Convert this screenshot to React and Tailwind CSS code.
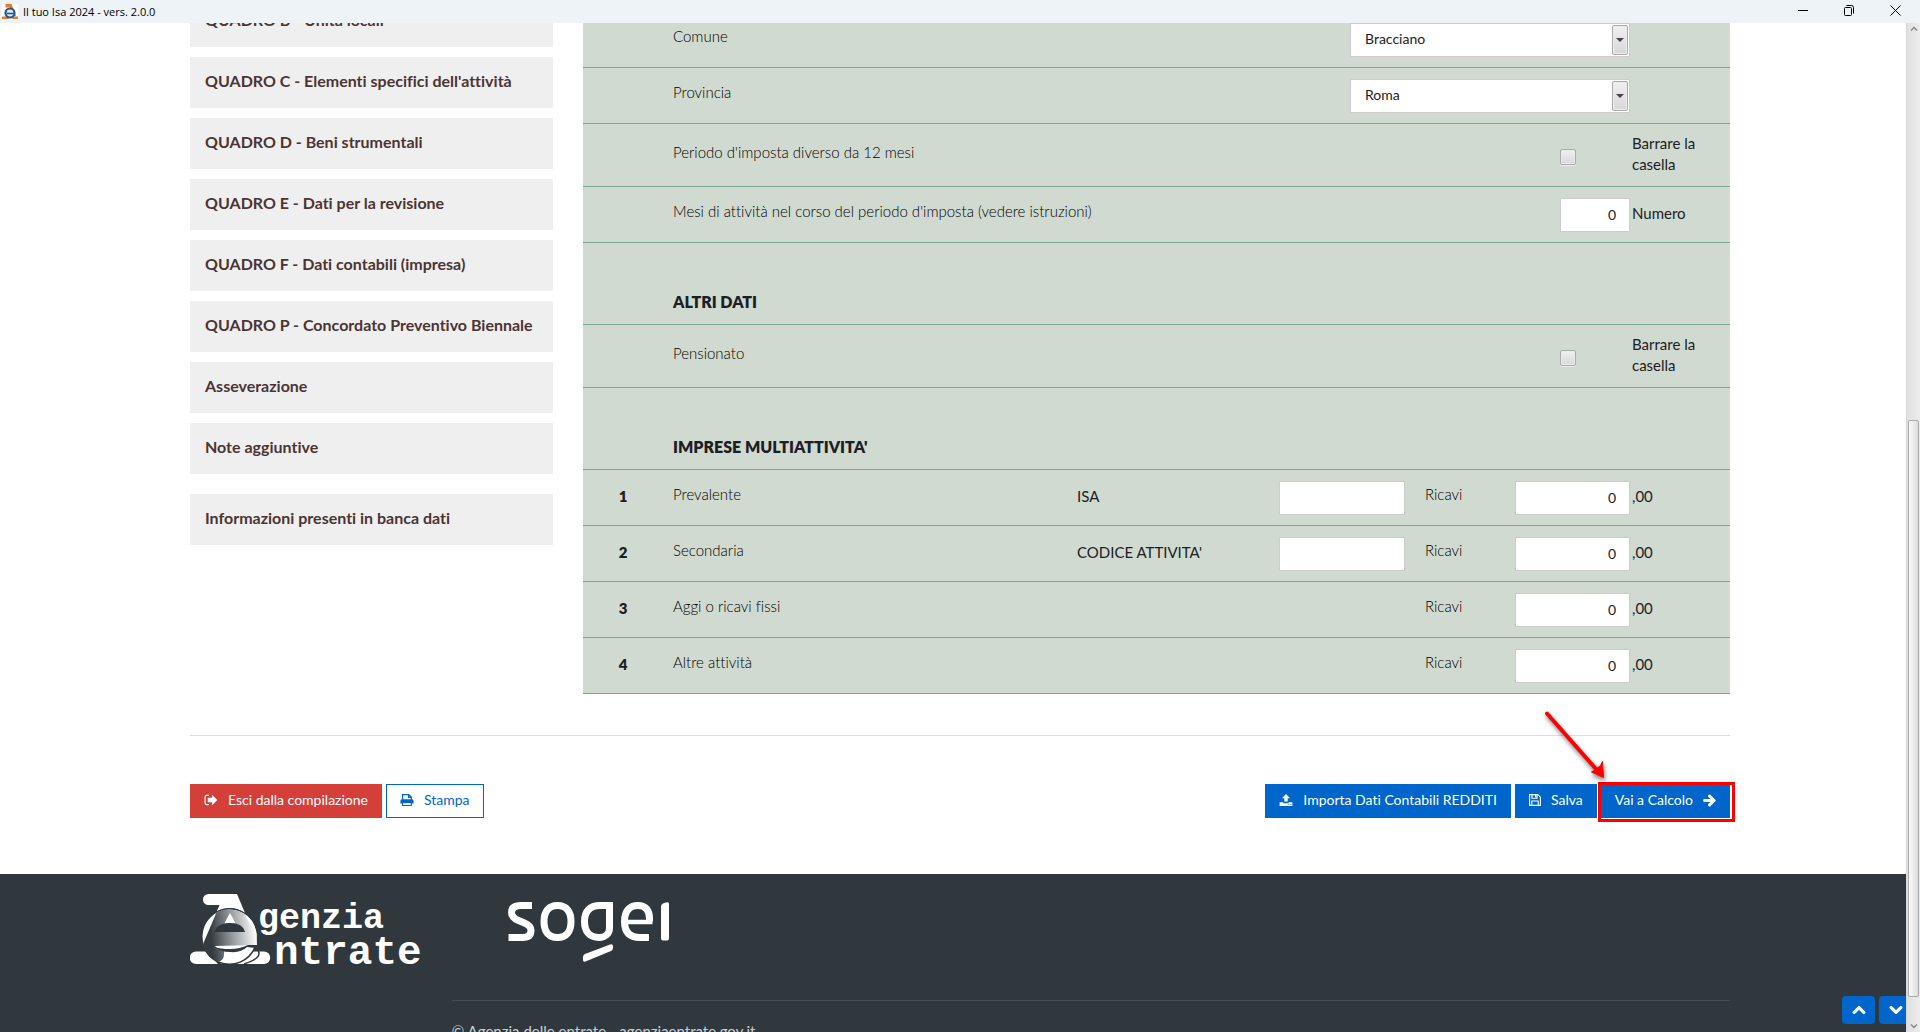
import React from "react";
import { FaArrowRight, FaChevronDown, FaChevronUp } from "react-icons/fa";

const sections = [
  "QUADRO B - Unità locali",
  "QUADRO C - Elementi specifici dell'attività",
  "QUADRO D - Beni strumentali",
  "QUADRO E - Dati per la revisione",
  "QUADRO F - Dati contabili (impresa)",
  "QUADRO P - Concordato Preventivo Biennale",
  "Asseverazione",
  "Note aggiuntive",
];

const activities = [
  { label: "Prevalente", code: "ISA" },
  { label: "Secondaria", code: "CODICE ATTIVITA'" },
  { label: "Aggi o ricavi fissi" },
  { label: "Altre attività" },
];

const rowBase = "grid items-center border-b border-[#78a890]";
const fieldRow = `${rowBase} grid-cols-[90px_minmax(0,1fr)_280px_100px]`;
const activityRow = `${rowBase} h-14 grid-cols-[90px_minmax(0,1fr)_202px_146px_90px_115px_100px]`;
const labelText = "pb-1.5 font-light text-black";
const unitText = "pb-0.5 pl-0.5";
const inputBox = "h-[34px] border border-[#ccc] bg-white px-[13px] text-right text-sm";
const button = "flex h-[34px] items-center gap-2.5 border px-[13px] pb-0.5 text-sm whitespace-nowrap";
const blueButton = `${button} border-[#06c] bg-[#06c] text-white`;

function AppIcon() {
  return (
    <svg className="size-4 bg-white" viewBox="0 0 16 16" aria-hidden="true">
      <path d="M3.500 0h6l4.500 12H11L8 3.500H3.500z" fill="#f07820" />
      <path d="M0 12.500h5l2 2.500H0zM16 12.500h-4l-2 2.500h6z" fill="#f07820" />
      <circle cx="8" cy="9" r="4.500" fill="#dce8f4" stroke="#27588f" strokeWidth="2.200" />
      <path d="M5 9.500h7" stroke="#27588f" strokeWidth="1.600" />
    </svg>
  );
}

function TitleBar() {
  return (
    <header className="flex h-[23px] shrink-0 items-center justify-between bg-[#eef3f8] pl-0.5 text-black">
      <div className="flex items-center gap-[5px] font-['Open_Sans',sans-serif] text-[11px]">
        <AppIcon />
        <span>Il tuo Isa 2024 - vers. 2.0.0</span>
      </div>
      <div className="flex h-full pr-0.5">
        <button type="button" aria-label="Riduci a icona" className="flex w-[46px] items-center justify-center pb-0.5">
          <svg className="size-[11px]" viewBox="0 0 11 11" stroke="currentColor" fill="none">
            <path d="M0 5.500h10" />
          </svg>
        </button>
        <button type="button" aria-label="Ripristina" className="flex w-[46px] items-center justify-center pb-0.5">
          <svg className="size-[11px]" viewBox="0 0 11 11" stroke="currentColor" fill="none">
            <rect x="0.500" y="2.500" width="7" height="8" rx="1" />
            <path d="M2.500 0.500h5a2 2 0 0 1 2 2V8.500" />
          </svg>
        </button>
        <button type="button" aria-label="Chiudi" className="flex w-[46px] items-center justify-center pb-0.5">
          <svg className="size-[11px]" viewBox="0 0 11 11" stroke="currentColor" fill="none">
            <path d="M0.500 0.500l10 10M10.500 0.500l-10 10" />
          </svg>
        </button>
      </div>
    </header>
  );
}

function SectionLink({ children }) {
  return (
    <a href="#" className="flex h-[51px] items-center bg-[#efefef] px-[15px] pb-1 text-base font-bold text-[#4c3434]">
      {children}
    </a>
  );
}

function SelectRow({ id, label, value }) {
  return (
    <div className={`${fieldRow} h-14`}>
      <label htmlFor={id} className={`col-start-2 ${labelText}`}>{label}</label>
      <div className="relative">
        <select id={id} defaultValue={value} className="h-[34px] w-full appearance-none rounded-none border border-[#ccc] bg-white pb-px pl-3.5 text-sm">
          <option>{value}</option>
        </select>
        <span className="pointer-events-none absolute top-0.5 right-0.5 flex h-[30px] w-4 items-center justify-center rounded-xs border border-[#aaa] bg-linear-to-b from-[#f0f0f0] to-[#d8d8d8] shadow-[inset_0_0_0_1px_#ececec]">
          <svg className="h-1 w-2" viewBox="0 0 8 4" fill="#444"><path d="M0 0h8L4 4z" /></svg>
        </span>
      </div>
    </div>
  );
}

function CheckRow({ id, label }) {
  return (
    <div className={`${fieldRow} h-[63px]`}>
      <label htmlFor={id} className={`col-start-2 ${labelText}`}>{label}</label>
      <div className="flex justify-end">
        <div className="flex w-[70px] pt-1">
          <input
            id={id}
            type="checkbox"
            className="size-4 appearance-none rounded-xs border border-[#aaa] bg-linear-to-b from-[#f0f0f0] to-[#d8d8d8] shadow-[inset_0_0_0_1px_#ececec,0_1px_0_#ececec] checked:bg-[#06c]"
          />
        </div>
      </div>
      <span className={`${unitText} pr-8`}>Barrare la casella</span>
    </div>
  );
}

function HeadingRow({ children }) {
  return (
    <div className="flex h-[82px] items-end border-b border-[#78a890] pb-3 pl-[90px]">
      <h2 className="text-base leading-[21px] font-extrabold">{children}</h2>
    </div>
  );
}

function ExitIcon() {
  return (
    <svg className="h-3 w-3.5" viewBox="0 0 14 12" fill="currentColor" aria-hidden="true">
      <path d="M5 10v1.200H2.800A2.300 2.300 0 0 1 .5 8.900V3.100A2.300 2.300 0 0 1 2.800.8H5V2H2.800a1.100 1.100 0 0 0-1.100 1.100v5.800A1.100 1.100 0 0 0 2.800 10z" />
      <path d="M8 .8l5.300 5.200L8 11.200V8.200H3.800V3.800H8z" />
    </svg>
  );
}

function PrintIcon() {
  return (
    <svg className="h-3 w-3.5" viewBox="0 0 14 12" aria-hidden="true">
      <path d="M2.600 6V.6h6.200l2.500 2.500V6M8.600.8v2.600h2.600M2.600 8.800v2.600h8.700V8.800z" fill="none" stroke="currentColor" strokeWidth="1.200" />
      <path d="M2 5.200h10a1.600 1.600 0 0 1 1.600 1.600v2.800H.4V6.800A1.600 1.600 0 0 1 2 5.200z" fill="currentColor" />
      <path d="M3.200 9.200h7.500v1.600H3.200z" fill="#fff" />
    </svg>
  );
}

function UploadIcon() {
  return (
    <svg className="h-3 w-3.5" viewBox="0 0 14 12" fill="currentColor" aria-hidden="true">
      <path d="M7 0l4 4.200H8.700V7.600H5.300V4.200H3z" />
      <path fillRule="evenodd" d="M.6 8.300H4.300V9.200h5.400V8.300h3.700V12H.6zM9.300 10.200v.9h1v-.9zM11.300 10.200v.9h1v-.9z" />
    </svg>
  );
}

function SaveIcon() {
  return (
    <svg className="size-3" viewBox="0 0 12 12" fill="none" stroke="currentColor" strokeWidth="1.100" aria-hidden="true">
      <path d="M.6.6h8.200l2.600 2.600v8.200H.6z" />
      <path d="M3 .8v3.400h5V.8M2.800 11V7h6.400v4" />
      <path d="M6 1h1.300v2.200H6z" fill="currentColor" stroke="none" />
    </svg>
  );
}

function AgenziaLogo() {
  return (
    <svg className="h-20 w-[234px]" viewBox="0 0 234 80" role="img" aria-label="Agenzia Entrate">
      <defs>
        <linearGradient id="disc" x1="0" y1="0.100" x2="1" y2="0">
          <stop offset="0.100" stopColor="#343b41" />
          <stop offset="0.450" stopColor="#8b9094" />
          <stop offset="0.950" stopColor="#fff" />
        </linearGradient>
      </defs>
      <path d="M18.500 1H47l8 19Q41 11 26.500 19l3-7H18.500a5.500 5.500 0 0 1 0-11z" fill="#fff" />
      <path d="M6 58.500h10l12 12.500H6a6.200 6.200 0 0 1 0-12.500zM58 58.500h16a6.200 6.200 0 0 1 0 12.500H30z" fill="#fff" />
      <circle cx="39.500" cy="43.500" r="28.500" fill="#30373d" />
      <circle cx="39.500" cy="43.500" r="27" fill="#fff" />
      <path d="M26 20.500L13.500 50Q15 64 28 69q7-1 6-11-6-1-9-5L67 52Q67 27 54 20.500q-6-3.500-14.500-4T26 20.500z" fill="url(#disc)" />
      <path d="M40 20l6 11q-6-2-12 0zM55 22l12 22q-1-15-12-22z" fill="#fff" />
      <path d="M24 39q3-9 16-9t15 9z" fill="#30373d" />
      <path d="M25 54q5 2 15 2T58 52h10q-1 2-3 3l-8-1q-6 6-17 5-10 0-15-5z" fill="#30373d" />
      <path d="M68 57q5 8-14 14" fill="none" stroke="#30373d" strokeWidth="1.500" />
      <g fill="#fff" fontFamily="'Liberation Mono', monospace" fontWeight="700">
        <text x="68" y="35" fontSize="35">genzia</text>
        <text x="84" y="70.500" fontSize="41">ntrate</text>
      </g>
    </svg>
  );
}

function SogeiLogo() {
  return (
    <svg className="h-[61px] w-[162px]" viewBox="0 0 162 61" role="img" aria-label="Sogei">
      <g fill="none" stroke="#fff" strokeWidth="7">
        <path d="M24 3.500H13Q3.500 3.500 3.500 10.500q0 5 7 8l6 2.500q6.500 2.500 6.500 7.500 0 7-8.500 7H.5" />
        <path d="M49.500 3.500c9 0 13.500 6 13.500 16s-4.500 16-13.500 16S36 29.500 36 19.500s4.500-16 13.500-16z" />
        <path d="M101.500 3.500H92c-10.500 0-15.500 6-15.500 16s5 16 14.500 16c6.500 0 10.500-4 10.500-9.500z" />
        <path d="M141 35.500h-9c-10.500 0-15.500-5.500-15.500-16s5-16 13.500-16c8 0 11.500 5 11.500 13v3" />
        <path d="M118 20h26.500" strokeWidth="4.500" />
      </g>
      <path d="M77 52l25-9.500q3-1 3 1.500v2q0 2-2 3L77.500 59.500Q75 60.500 75 58v-3q0-2 2-3zM153 5q0-3 3-4l3-.8q2-.4 2 1.800v34.500q0 2-2 2h-4q-2 0-2-2z" fill="#fff" />
    </svg>
  );
}

function CalloutArrow() {
  return (
    <svg className="pointer-events-none absolute -top-[76px] -left-[58px] h-[76px] w-[68px] drop-shadow-[1px_3px_2px_rgba(0,0,0,0.5)]" viewBox="0 0 68 76" aria-hidden="true">
      <path d="M4 5.500L53 61" stroke="#f00" strokeWidth="4" strokeLinecap="round" />
      <path d="M60.500 69.500l-12-5.500 4-2.500 5-4 2-4z" fill="#f00" stroke="#f00" />
    </svg>
  );
}

function Scrollbar() {
  return (
    <div className="absolute inset-y-0 right-0 flex w-3.5 flex-col items-center border-l border-[#d8d8d8] bg-linear-to-r from-[#e0e0e0] to-[#ececec] py-0.5" aria-hidden="true">
      <svg className="h-2 w-2 shrink-0" viewBox="0 0 8 8" fill="none" stroke="#888" strokeWidth="1.500"><path d="M1 5.500l3-3 3 3" /></svg>
      <div className="flex w-full grow flex-col">
        <div className="grow-[388]" />
        <div className="mx-px grow-[576] rounded-xs border border-[#aaa] bg-linear-to-r from-[#fafafa] to-[#dcdcdc]" />
        <div className="grow-[25]" />
      </div>
      <svg className="h-2 w-2 shrink-0" viewBox="0 0 8 8" fill="none" stroke="#888" strokeWidth="1.500"><path d="M1 2.500l3 3 3-3" /></svg>
    </div>
  );
}

export default function App() {
  return (
    <div className="flex h-screen flex-col overflow-hidden bg-white font-[Lato,sans-serif] text-[15px] leading-[21px] text-[#1c2024] [font-variant-ligatures:none]">
      <TitleBar />
      <div className="relative min-h-0 grow overflow-hidden">
        <div className="-mt-[27px]">
          <main className="mx-auto max-w-[1570px] px-[15px] pb-14">
            <div className="flex items-start gap-[30px]">
              <nav className="flex w-[363px] shrink-0 flex-col gap-2.5">
                {sections.map((name) => (
                  <SectionLink key={name}>{name}</SectionLink>
                ))}
                <div className="pt-2.5">
                  <SectionLink>Informazioni presenti in banca dati</SectionLink>
                </div>
              </nav>

              <form className="mt-4 min-w-0 grow bg-[#d0dad0]">
                <SelectRow id="comune" label="Comune" value="Bracciano" />
                <SelectRow id="provincia" label="Provincia" value="Roma" />
                <CheckRow id="periodo" label="Periodo d'imposta diverso da 12 mesi" />
                <div className={`${fieldRow} h-14`}>
                  <label htmlFor="mesi" className={`col-start-2 ${labelText}`}>
                    Mesi di attività nel corso del periodo d'imposta (vedere istruzioni)
                  </label>
                  <div className="flex justify-end">
                    <input id="mesi" defaultValue="0" className={`${inputBox} w-[70px]`} />
                  </div>
                  <span className={unitText}>Numero</span>
                </div>
                <HeadingRow>ALTRI DATI</HeadingRow>
                <CheckRow id="pensionato" label="Pensionato" />
                <HeadingRow>IMPRESE MULTIATTIVITA'</HeadingRow>
                {activities.map(({ label, code }, i) => (
                  <div key={label} className={activityRow}>
                    <span className="pr-2.5 pb-0.5 text-center font-extrabold">{i + 1}</span>
                    <span className={labelText}>{label}</span>
                    {code && <label htmlFor={`codice-${i}`} className="pb-0.5">{code}</label>}
                    {code && <input id={`codice-${i}`} className={`${inputBox} w-[126px]`} />}
                    <label htmlFor={`ricavi-${i}`} className={`col-start-5 ${labelText}`}>Ricavi</label>
                    <input id={`ricavi-${i}`} defaultValue="0" className={`${inputBox} w-full`} />
                    <span className={unitText}>,00</span>
                  </div>
                ))}
              </form>
            </div>

            <hr className="mt-[41px] border-[#dcdcdc]" />

            <div className="mt-12 flex justify-between">
              <div className="flex gap-1">
                <button type="button" className={`${button} border-[#d43f3a] bg-[#d43f3a] text-white`}>
                  <ExitIcon />
                  Esci dalla compilazione
                </button>
                <button type="button" className={`${button} border-[#06c] bg-white text-[#06c]`}>
                  <PrintIcon />
                  Stampa
                </button>
              </div>
              <div className="flex gap-1">
                <button type="button" className={blueButton}>
                  <UploadIcon />
                  Importa Dati Contabili REDDITI
                </button>
                <button type="button" className={blueButton}>
                  <SaveIcon />
                  Salva
                </button>
                <div className="relative">
                  <button type="button" className={blueButton}>
                    Vai a Calcolo
                    <FaArrowRight className="size-[13px]" stroke="currentColor" strokeWidth="40" />
                  </button>
                  <div className="pointer-events-none absolute -top-0.5 -right-[5px] -bottom-1 -left-[3px] border-[3px] border-[#f00]" />
                  <CalloutArrow />
                </div>
              </div>
            </div>
          </main>

          <footer className="bg-[#30373d] text-[#c8d0d6]">
            <div className="mx-auto max-w-[1570px] px-[15px] pb-16">
              <div className="flex items-start gap-[84px] pt-[19px]">
                <AgenziaLogo />
                <div className="pt-[9px]">
                  <SogeiLogo />
                </div>
              </div>
              <div className="mt-[27px] ml-[17%] border-t border-[#454d54] pt-5">
                © Agenzia delle entrate - agenziaentrate.gov.it
              </div>
            </div>
          </footer>
        </div>

        <div className="absolute right-2 bottom-2 flex gap-1 text-white">
          <button type="button" aria-label="Vai all'inizio" className="flex h-7 w-[33px] items-center justify-center rounded-sm bg-[#06c]">
            <FaChevronUp className="size-3.5" stroke="currentColor" strokeWidth="40" />
          </button>
          <button type="button" aria-label="Vai alla fine" className="flex h-7 w-[33px] items-center justify-center rounded-sm bg-[#06c]">
            <FaChevronDown className="size-3.5" stroke="currentColor" strokeWidth="40" />
          </button>
        </div>
        <Scrollbar />
      </div>
    </div>
  );
}
